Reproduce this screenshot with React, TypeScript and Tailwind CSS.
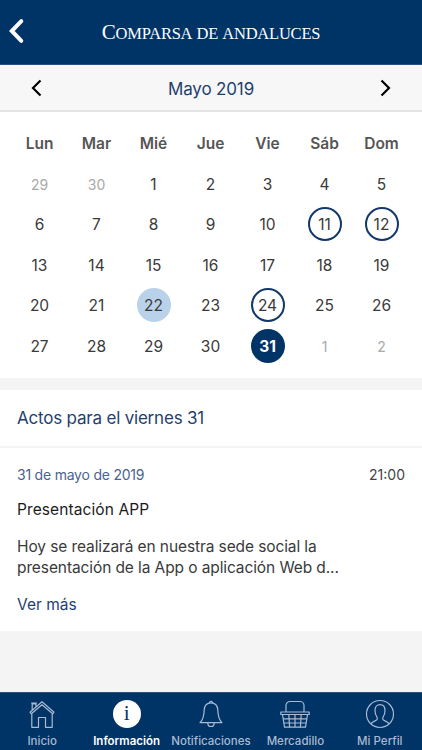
import React, { useState } from 'react';
import clsx from 'clsx';

type Day = {
    num: number;
    outside?: boolean;
    event?: boolean;
    today?: boolean;
};

const weekdays = ['Lun', 'Mar', 'Mié', 'Jue', 'Vie', 'Sáb', 'Dom'];

const eventDays = [11, 12, 24, 31];

const days: Day[] = [
    { num: 29, outside: true },
    { num: 30, outside: true },
    ...Array.from({ length: 31 }, (_, i) => ({
        num: i + 1,
        event: eventDays.includes(i + 1),
        today: i + 1 === 22,
    })),
    { num: 1, outside: true },
    { num: 2, outside: true },
];

const HomeIcon = () => (
    <svg width="28" height="30" viewBox="0 0 28 30" fill="none" stroke="currentColor" strokeWidth="1.2" strokeLinejoin="round">
        <path d="M2 13.2 14 2.800l12 10.400-1.300 1.600L14 5.700 3.300 14.800z" />
        <path d="M4.200 11.200V5h3.800v3M3.200 4.200h5.600" />
        <path d="M3.800 14.800v13.500h6.700V18.500h7v9.800h6.700V14.800" />
    </svg>
);

const InfoIcon = () => (
    <span className="flex h-7 w-7 items-center justify-center rounded-full bg-white pb-0.5 font-['Liberation_Serif',serif] text-[21px] leading-none font-normal text-[#003366]">
        i
    </span>
);

const BellIcon = () => (
    <svg width="28" height="30" viewBox="0 0 28 30" fill="none" stroke="currentColor" strokeWidth="1.2" strokeLinejoin="round">
        <path d="M12.600 4.100a1.450 1.450 0 1 1 2.800 0" />
        <path d="M14 3.800c-4.300 0-6.600 3.200-6.800 7.200-.2 5.200-.5 9.500-4.200 12.600h22c-3.700-3.100-4-7.400-4.200-12.600-.2-4-2.500-7.200-6.800-7.200z" />
        <path d="M10.800 23.900a3.200 3.600 0 0 0 6.400 0" />
    </svg>
);

const BasketIcon = () => (
    <svg width="32" height="30" viewBox="0 0 32 30" fill="none" stroke="currentColor" strokeWidth="1.2" strokeLinejoin="round">
        <path d="M7 13V6.500A4 4 0 0 1 11 2.500h10a4 4 0 0 1 4 4V13" />
        <path d="M1.800 13h28.400v2.500H1.800z" />
        <path d="M3.500 15.500l2 12.600h21l2-12.600" />
        <path d="M4.200 19.800h23.600M4.900 24h22.200M9.800 15.500l.8 12.600M16 15.500v12.600M22.200 15.500l-.8 12.600" />
    </svg>
);

const ProfileIcon = () => (
    <svg width="30" height="30" viewBox="0 0 30 30" fill="none" stroke="currentColor" strokeWidth="1.2" strokeLinejoin="round">
        <circle cx="15" cy="15" r="13.500" />
        <path d="M5.800 24.800c1.200-1.700 3.200-2.500 5-3.300 1.700-.7 1.800-2.200 1.100-3.500-1.200-1.900-1.900-4-1.900-6.500 0-3.700 1.900-5.800 5-5.800s5 2.100 5 5.800c0 2.500-.7 4.600-1.900 6.500-.7 1.300-.6 2.800 1.100 3.500 1.800.8 3.800 1.600 5 3.300" />
    </svg>
);

const tabs = [
    { label: 'Inicio', icon: HomeIcon },
    { label: 'Información', icon: InfoIcon },
    { label: 'Notificaciones', icon: BellIcon },
    { label: 'Mercadillo', icon: BasketIcon },
    { label: 'Mi Perfil', icon: ProfileIcon },
];

const App: React.FC = () => {
    const [selected, setSelected] = useState<number>(31);
    const [activeTab, setActiveTab] = useState<string>('Información');

    return (
        <div className="flex h-[750px] w-[422px] flex-col overflow-hidden bg-[#f4f4f4] font-['Inter','Liberation_Sans',sans-serif]">
            <header className="grid h-[65px] shrink-0 grid-cols-[40px_1fr_40px] items-center border-b border-[#2b527c] bg-[#003366] text-white">
                <button type="button" aria-label="Volver" className="pb-0.5 pl-2">
                    <svg width="18" height="28" viewBox="0 0 18 28" fill="none" stroke="currentColor" strokeWidth="4" strokeLinecap="round">
                        <path d="M13.300 4.200 3.800 14l9.500 9.800" />
                    </svg>
                </button>
                <h1 className="pt-px text-center font-['Liberation_Serif',serif] text-[16.500px] leading-6 tracking-[-0.22px] whitespace-nowrap [word-spacing:1.2px]">
                    <span className="text-[21px]">C</span>OMPARSA DE ANDALUCES
                </h1>
            </header>

            <div className="flex h-[47px] shrink-0 items-center justify-between border-b-2 border-[#e4e4e4] bg-[#f7f7f7] px-[31px] text-black">
                <button type="button" aria-label="Mes anterior">
                    <svg width="11" height="18" viewBox="0 0 11 18" fill="none" stroke="currentColor" strokeWidth="2.2">
                        <path d="M9.500 1.500 2 9l7.500 7.500" />
                    </svg>
                </button>
                <h2 className="pt-[5px] text-[17px] tracking-[-0.15px] text-[#1f3f6e]">Mayo 2019</h2>
                <button type="button" aria-label="Mes siguiente">
                    <svg width="11" height="18" viewBox="0 0 11 18" fill="none" stroke="currentColor" strokeWidth="2.2">
                        <path d="M1.500 1.500 9 9l-7.500 7.500" />
                    </svg>
                </button>
            </div>

            <section className="h-[266px] shrink-0 bg-white pt-[11px] pr-3 pl-[11px]">
                <div className="grid grid-cols-7">
                    {weekdays.map((day) => (
                        <div key={day} className="flex h-[40.5px] items-center justify-center text-[15.5px] font-semibold text-[#555]">
                            {day}
                        </div>
                    ))}
                    {days.map((day, i) => (
                        <div key={i} className="flex h-[40.5px] items-center justify-center">
                            <button
                                type="button"
                                onClick={() => !day.outside && setSelected(day.num)}
                                className={clsx(
                                    'flex h-[34px] w-[34px] items-center justify-center rounded-full pt-px',
                                    day.outside ? 'text-[14px] text-[#a9a9a9]' : 'text-[15.5px]',
                                    !day.outside && day.num === selected && 'bg-[#003366] font-bold text-white',
                                    !day.outside && day.num !== selected && 'text-[#3a3a3a]',
                                    day.event && day.num !== selected && 'border-2 border-[#12386b]',
                                    day.today && day.num !== selected && 'bg-[#b9d2ea]'
                                )}
                            >
                                {day.num}
                            </button>
                        </div>
                    ))}
                </div>
            </section>

            <section className="mt-3 h-[241px] shrink-0 bg-white">
                <h3 className="flex h-[58px] items-center border-b-2 border-[#f4f4f4] px-[17px] pt-[2px] text-[17px] tracking-[-0.2px] text-[#1f3f6e]">
                    Actos para el viernes 31
                </h3>
                <article className="px-[17px] pt-[17px] text-[#3a3a3a]">
                    <div className="flex justify-between text-[14px] leading-5">
                        <span className="tracking-[-0.22px] text-[#4a6490]">31 de mayo de 2019</span>
                        <span className="text-[#444]">21:00</span>
                    </div>
                    <h4 className="mt-[15px] text-[15.5px] leading-5 tracking-[0.1px] text-[#1c1c1c]">Presentación APP</h4>
                    <p className="mt-4 text-[15.5px] leading-[21px] tracking-[-0.1px]">
                        Hoy se realizará en nuestra sede social la
                        <br />
                        presentación de la App o aplicación Web d...
                    </p>
                    <a href="#ver" className="mt-[17px] block text-[15.5px] leading-5 text-[#1f3f6e]">
                        Ver más
                    </a>
                </article>
            </section>

            <nav className="mt-auto grid h-[58px] shrink-0 grid-cols-5 border-t border-[#2b527c] bg-[#003366]">
                {tabs.map(({ label, icon: Icon }) => (
                    <button
                        key={label}
                        type="button"
                        onClick={() => setActiveTab(label)}
                        className={clsx(
                            'flex flex-col items-center pt-1.5',
                            label === activeTab ? 'font-semibold text-white' : 'font-medium text-[#a9bad2]'
                        )}
                    >
                        <span className="flex h-[30px] items-center">
                            <Icon />
                        </span>
                        <span className="mt-[5px] text-[11.5px] leading-[14px] whitespace-nowrap">{label}</span>
                    </button>
                ))}
            </nav>
        </div>
    );
};

export default App;
